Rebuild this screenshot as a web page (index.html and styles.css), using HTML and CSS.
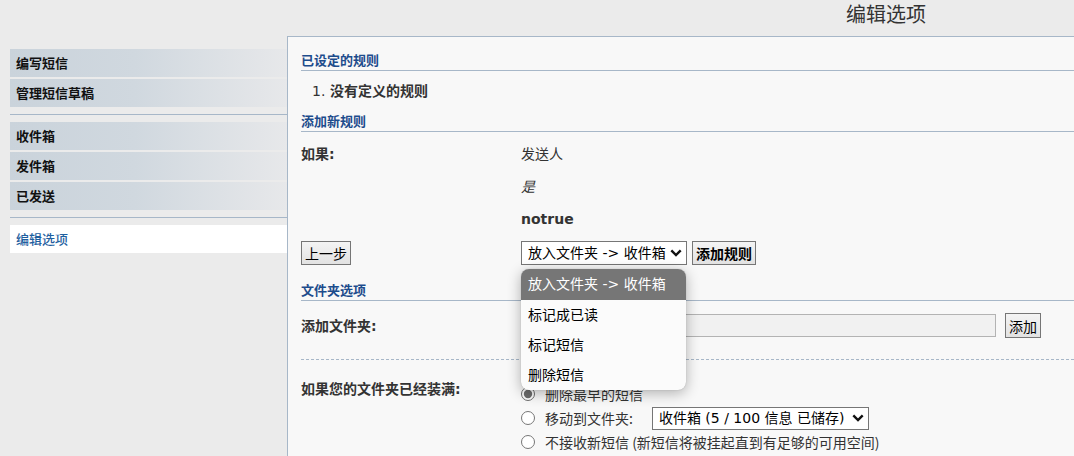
FILE: index.html
```html
<!DOCTYPE html>
<html lang="zh-CN">
<head>
<meta charset="utf-8">
<title>编辑选项</title>
<link rel="stylesheet" href="styles.css">
</head>
<body>
<header class="top">
  <h1 class="page-title">编辑选项</h1>
</header>
<div class="main">
  <nav class="side">
    <div class="group">
      <a class="nav-item">编写短信</a>
      <a class="nav-item">管理短信草稿</a>
    </div>
    <hr class="side-sep">
    <div class="group">
      <a class="nav-item">收件箱</a>
      <a class="nav-item">发件箱</a>
      <a class="nav-item">已发送</a>
    </div>
    <hr class="side-sep">
    <div class="group">
      <a class="nav-item active">编辑选项</a>
    </div>
  </nav>

  <section class="panel">
    <h2 class="sec-title first">已设定的规则</h2>
    <div class="rules"><span class="num">1.</span><strong>没有定义的规则</strong></div>

    <h2 class="sec-title second">添加新规则</h2>
    <div class="rule-grid">
      <div class="label">如果:</div>
      <div class="vals">
        <div class="val">发送人</div>
        <div class="val it">是</div>
        <div class="val bold-val">notrue</div>
      </div>
      <div class="btn-cell"><button class="btn">上一步</button></div>
      <div class="actions">
        <span class="select-wrap">
          <select class="sel sel-action">
            <option>放入文件夹 -&gt; 收件箱</option>
            <option>标记成已读</option>
            <option>标记短信</option>
            <option>删除短信</option>
          </select>
          <div class="popup">
            <div class="opt selected">放入文件夹 -&gt; 收件箱</div>
            <div class="opt">标记成已读</div>
            <div class="opt">标记短信</div>
            <div class="opt">删除短信</div>
          </div>
        </span>
        <button class="btn btn-strong">添加规则</button>
      </div>
    </div>

    <h2 class="sec-title third">文件夹选项</h2>
    <div class="folder-row">
      <div class="label">添加文件夹:</div>
      <div class="folder-ctrl">
        <input class="txt" type="text">
        <button class="btn btn-add">添加</button>
      </div>
    </div>

    <div class="dash"></div>

    <div class="full-row">
      <div class="label">如果您的文件夹已经装满:</div>
      <div class="radios">
        <label class="radio-row"><input type="radio" name="full" checked><span>删除最早的短信</span></label>
        <label class="radio-row"><input type="radio" name="full"><span>移动到文件夹:</span>
          <select class="sel sel-folder"><option>收件箱 (5 / 100 信息 已储存)</option></select>
        </label>
        <label class="radio-row"><input type="radio" name="full"><span>不接收新短信 (新短信将被挂起直到有足够的可用空间)</span></label>
      </div>
    </div>
  </section>
</div>
</body>
</html>
```

FILE: styles.css
```css
html, body {
  margin: 0;
  padding: 0;
}
body {
  background: #ebebeb;
  font-family: "DejaVu Sans", "Noto Sans CJK SC", sans-serif;
  font-size: 14px;
  color: #333;
  overflow: hidden;
}
.top {
  height: 36px;
  box-sizing: border-box;
  padding: 2px 0 0 846px;
}
.page-title {
  margin: 0;
  font-size: 20px;
  line-height: 24px;
  font-weight: normal;
  color: #333;
  font-family: "Noto Sans CJK SC", sans-serif;
}
.main {
  display: flex;
  align-items: stretch;
  min-height: 420px;
}
.side {
  width: 287px;
  flex: none;
  box-sizing: border-box;
  padding: 13px 0 0 10px;
}
.group {
  display: flex;
  flex-direction: column;
  gap: 2px;
}
.nav-item {
  display: block;
  height: 28px;
  line-height: 28px;
  padding-left: 6px;
  font-size: 13px;
  font-weight: bold;
  color: #111;
  font-family: "Noto Sans CJK SC", sans-serif;
  background: linear-gradient(to right, #cad3db 0%, #d0d8df 45%, #e7e8ea 100%);
}
.nav-item.active {
  background: #fff;
  color: #1f5f9f;
  font-weight: 500;
}
.side-sep {
  margin: 7px 0;
  border: 0;
  height: 1px;
  background: #a7b7c8;
}
.panel {
  flex: 1;
  background: #f8f8f8;
  border-top: 1px solid #a7b7c8;
  border-left: 1px solid #a7b7c8;
  padding: 0 0 0 13px;
}
.sec-title {
  margin: 0;
  font-size: 13px;
  line-height: 18px;
  padding-bottom: 1px;
  border-bottom: 1px solid #a7b7c8;
  color: #1d4c8c;
  font-weight: bold;
  font-family: "Noto Sans CJK SC", sans-serif;
}
.sec-title.first { margin-top: 14px; }
.sec-title.second { margin-top: 11px; }
.sec-title.third { margin-top: 16px; }
.rules {
  margin-top: 9px;
  line-height: 20px;
  padding-left: 11px;
  color: #333;
}
.num {
  display: inline-block;
  width: 18px;
}
.rules strong {
  font-family: "Noto Sans CJK SC", sans-serif;
}
.label {
  font-weight: bold;
  color: #333;
  line-height: 20px;
}
.rule-grid {
  margin-top: 12px;
  display: grid;
  grid-template-columns: 220px 1fr;
  row-gap: 12px;
}
.vals {
  display: flex;
  flex-direction: column;
}
.val {
  line-height: 20px;
}
.val + .val { margin-top: 13px; }
.val.bold-val { margin-top: 12px; font-weight: bold; }
.val.it { font-style: italic; }
.btn-cell, .actions {
  display: flex;
  align-items: center;
  height: 24px;
}
.actions { gap: 5px; }
.btn {
  height: 24px;
  padding: 0 3px;
  border: 1px solid #767676;
  border-radius: 0;
  background: linear-gradient(#f4f4f4, #e2e2e2);
  font-family: "Noto Sans CJK SC", sans-serif;
  font-size: 14px;
  color: #000;
  line-height: 20px;
  margin: 0;
}
.btn-strong { font-weight: bold; }
.select-wrap {
  position: relative;
  display: inline-block;
  height: 24px;
}
.sel {
  -webkit-appearance: none;
  appearance: none;
  font-family: "DejaVu Sans", "Noto Sans CJK SC", sans-serif;
  font-size: 14px;
  color: #000;
  border: 1px solid #767676;
  border-radius: 0;
  margin: 0;
  padding: 0 0 0 6px;
  background-color: #fff;
  background-image: url("data:image/svg+xml,%3Csvg xmlns='http://www.w3.org/2000/svg' width='12' height='8' viewBox='0 0 12 8'%3E%3Cpath d='M1.3 1.3 6 6 10.7 1.3' fill='none' stroke='%23111' stroke-width='2.4'/%3E%3C/svg%3E");
  background-repeat: no-repeat;
  background-position: right 4px center;
  background-size: 12px 8px;
}
.sel-action {
  width: 166px;
  height: 24px;
}
.popup {
  position: absolute;
  left: 0;
  top: 28px;
  width: 165px;
  background: #fbfbfb;
  border-radius: 8px;
  overflow: hidden;
  box-shadow: 0 3px 14px rgba(0, 0, 0, 0.3), 0 0 1px rgba(0, 0, 0, 0.3);
  z-index: 5;
}
.opt {
  height: 30px;
  line-height: 30px;
  padding-left: 7px;
  color: #000;
  white-space: nowrap;
}
.opt.selected {
  height: 31px;
  line-height: 31px;
  background: #767676;
  color: #fff;
}
.folder-row {
  margin-top: 12px;
  display: grid;
  grid-template-columns: 220px 1fr;
  align-items: center;
}
.folder-ctrl {
  display: flex;
  align-items: center;
  gap: 9px;
  height: 25px;
}
.txt {
  width: 475px;
  height: 23px;
  box-sizing: border-box;
  border: 1px solid #b3b3b3;
  background: #f1f1f1;
  margin: 0;
}
.btn-add { height: 25px; }
.dash {
  margin-top: 21px;
  border-top: 1px dashed #a7b7c8;
}
.full-row {
  margin-top: 19px;
  display: grid;
  grid-template-columns: 220px 1fr;
  align-items: start;
}
.radios {
  padding-top: 3px;
  display: flex;
  flex-direction: column;
}
.radio-row {
  display: flex;
  align-items: center;
  height: 24px;
  line-height: 20px;
  color: #333;
}
.radio-row input {
  margin: 0 10px 0 0;
  width: 14px;
  height: 14px;
  accent-color: #6e6e6e;
}
.radio-row span {
  font-family: "Noto Sans CJK SC", sans-serif;
}
.sel-folder {
  margin-left: 19px;
  width: 217px;
  height: 23px;
}
```
